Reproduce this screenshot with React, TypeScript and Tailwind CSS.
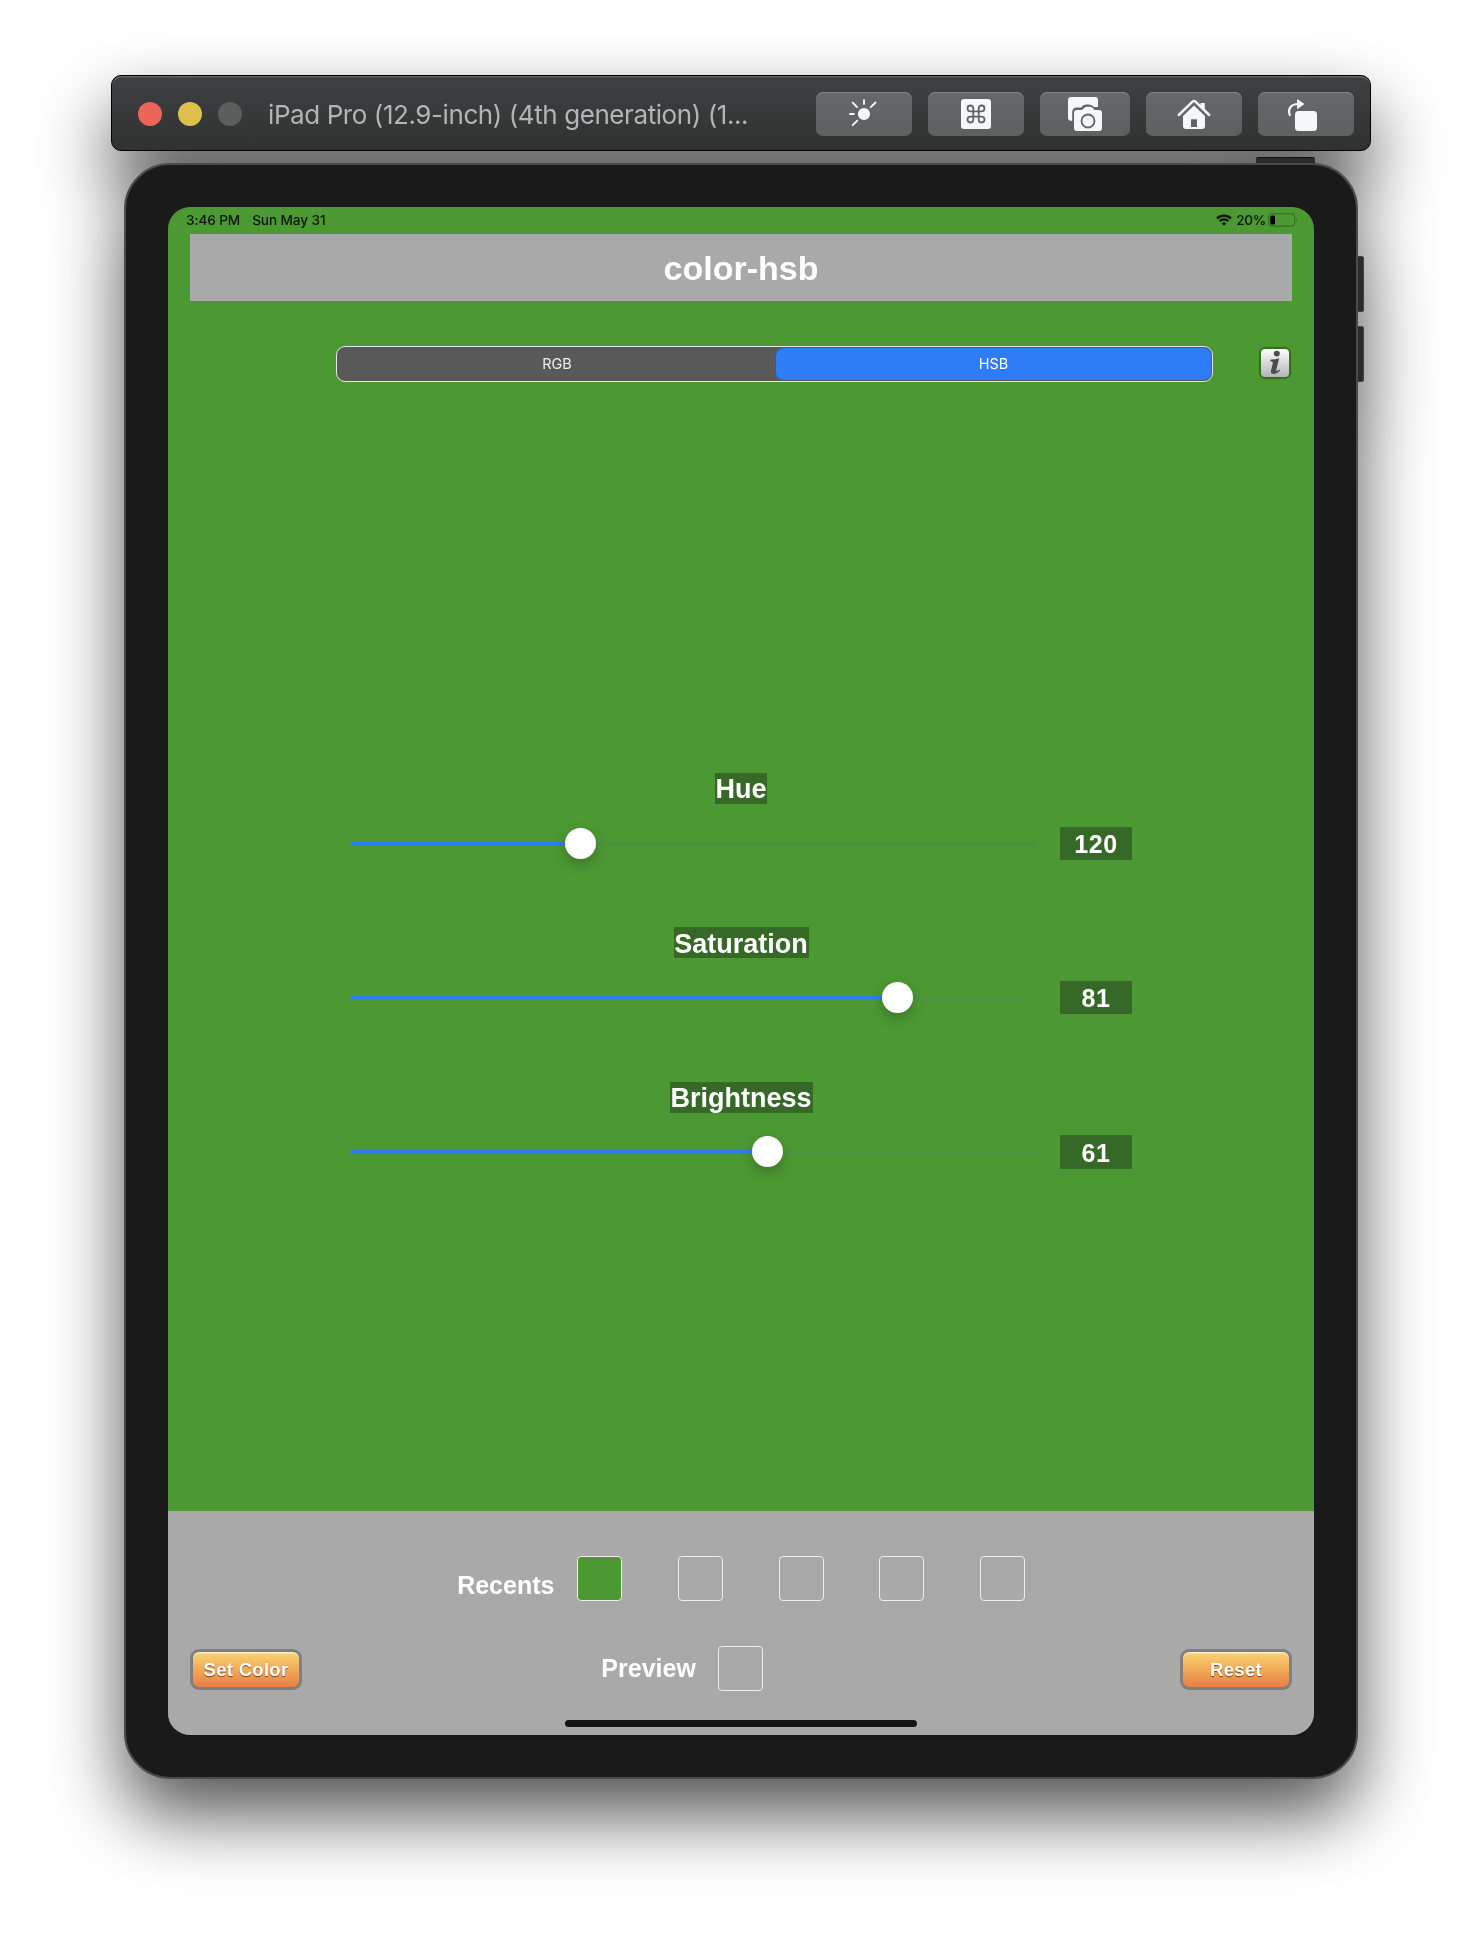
import React from "react";

const ROUNDED = "font-['Liberation_Sans'] font-bold text-white";

function ToolButton({ className = "w-24", children }: { className?: string; children: React.ReactNode }) {
  return (
    <button
      className={`${className} flex h-11 shrink-0 items-center justify-center rounded-[7px] bg-gradient-to-b from-[#66686a] to-[#5e5f60] shadow-[inset_0_1px_0_#808182]`}
    >
      {children}
    </button>
  );
}

function SunIcon() {
  return (
    <svg width="96" height="44" viewBox="0 0 96 44" stroke="#f6f7f9" strokeWidth="1.9" strokeLinecap="round">
      <circle cx="48" cy="22" r="6.1" fill="#f6f7f9" stroke="none" />
      <path d="M48 8v4M59.5 10.5l-4.700 4.700M36.700 10.700l4.300 4.300M34 22h3.800M36.700 33.200l4.600-4.600" />
    </svg>
  );
}

function CommandIcon() {
  return (
    <svg width="96" height="44" viewBox="0 0 96 44">
      <rect x="33" y="7" width="30" height="30" rx="3" fill="#f6f7f9" />
      <path
        d="M45.300 19.300v-3a2.900 2.900 0 1 0-2.900 3h11.200a2.900 2.900 0 1 0-2.900-3v11.400a2.900 2.900 0 1 0 2.900-3H42.400a2.900 2.900 0 1 0 2.900 3z"
        fill="none"
        stroke="#626364"
        strokeWidth="1.800"
      />
    </svg>
  );
}

function CameraIcon() {
  return (
    <svg width="90" height="44" viewBox="0 0 90 44">
      <path
        d="M31 5h24q3 0 3 3v7h-4q-2-2.500-5-2.500h-3q-3 0-5 3h-4q-4.800 0-4.800 4.800v8.600q-3.200 0-4.200-2.200V8q0-3 3-3z"
        fill="#f6f7f9"
      />
      <path
        d="M37 18h4.500q1 0 2-1.600 1.300-1.600 3-1.600h3.700q1.700 0 3 1.600 1 1.600 2 1.600H59q3 0 3 3v15q0 3-3 3H37q-3 0-3-3V21q0-3 3-3z"
        fill="#f6f7f9"
      />
      <circle cx="48" cy="29" r="6.500" fill="none" stroke="#626364" strokeWidth="1.800" />
    </svg>
  );
}

function HomeIcon() {
  return (
    <svg width="96" height="44" viewBox="0 0 96 44">
      <path d="M54.500 16v-5h4.300v9z" fill="#f6f7f9" />
      <path d="M32.800 23 46.500 9.700q1.500-1.400 3 0L63.200 23" fill="none" stroke="#f6f7f9" strokeWidth="2.500" strokeLinecap="round" />
      <path d="M37 23.900 48 13.400l11 10.500V34q0 3-3 3H40q-3 0-3-3z" fill="#f6f7f9" />
      <path d="M45 27.300h6V35h-6z" fill="#606162" />
    </svg>
  );
}

function RotateIcon() {
  return (
    <svg width="96" height="44" viewBox="0 0 96 44">
      <rect x="37" y="19" width="22" height="20" rx="3.500" fill="#f6f7f9" />
      <path d="M31.800 23C29.500 17 33 12 40 12" fill="none" stroke="#f6f7f9" strokeWidth="2.200" strokeLinecap="round" />
      <path d="M39.500 7.700 45.800 12l-6.300 4.500z" fill="#f6f7f9" stroke="#f6f7f9" strokeLinejoin="round" />
    </svg>
  );
}

function Toolbar() {
  return (
    <header className="flex h-[76px] w-[1260px] items-center rounded-[10px] border border-black bg-gradient-to-b from-[#3e4042] to-[#303231] pr-4 pl-[26px] shadow-[inset_0_1.5px_0_#636465]">
      <div className="flex gap-4 pt-px">
        <span className="size-6 rounded-full bg-[#ed6559]" />
        <span className="size-6 rounded-full bg-[#e0c04c]" />
        <span className="size-6 rounded-full bg-[#5c5e5e]" />
      </div>
      <h1 className="ml-[26px] flex-1 whitespace-nowrap pt-0.5 font-[Inter] text-[26px] tracking-[-0.42px] text-[#b2b4b5]">
        iPad Pro (12.9-inch) (4th generation) (1...
      </h1>
      <nav className="flex gap-4 pt-0.5">
        <ToolButton><SunIcon /></ToolButton>
        <ToolButton><CommandIcon /></ToolButton>
        <ToolButton className="w-[90px]"><CameraIcon /></ToolButton>
        <ToolButton><HomeIcon /></ToolButton>
        <ToolButton><RotateIcon /></ToolButton>
      </nav>
    </header>
  );
}

function StatusBar() {
  return (
    <div className="flex h-[27px] items-center justify-between pr-[16px] pl-[18px] font-[Inter] text-[13.6px] font-medium text-[#0b1608]">
      <div className="flex gap-3 tracking-[-0.1px]">
        <span>3:46 PM</span>
        <span>Sun May 31</span>
      </div>
      <div className="flex items-center">
        <svg width="16" height="12" viewBox="0 0 16 12" fill="none" stroke="#0b1608" strokeWidth="2.200">
          <path d="M1 4.400a10 10 0 0 1 14 0M3.600 7.100a6.300 6.300 0 0 1 8.800 0" />
          <path d="M8 11.700 5.700 9.400a3.300 3.300 0 0 1 4.600 0z" fill="#0b1608" stroke="none" />
        </svg>
        <span className="ml-1 tracking-[-0.3px]">20%</span>
        <svg className="ml-0.5" width="30" height="14" viewBox="0 0 30 14">
          <rect x="0.700" y="0.700" width="26" height="12.400" rx="3.300" fill="none" stroke="#356a26" strokeWidth="1.100" />
          <rect x="2.300" y="2.400" width="4.700" height="9" rx="1.500" fill="#000" />
          <path d="M28 5q1.700 2 0 4z" fill="#356a26" />
        </svg>
      </div>
    </div>
  );
}

function Segments() {
  return (
    <div className="mt-[44.5px] flex h-[36.5px] items-center">
      <div className="ml-[168px] flex h-[36.5px] w-[877px] rounded-[9px] border border-[#e8e8e8] bg-[#595959] p-px font-[Inter] text-[14.500px] text-white">
        <span className="flex flex-1 items-center justify-center text-white/90">RGB</span>
        <span className="flex w-[435px] items-center justify-center rounded-[7px] bg-[#2e7cf6] shadow-[0_0_1px_#24334e]">HSB</span>
      </div>
      <button className="-mt-0.5 ml-[46px] flex size-8 items-center justify-center rounded-[7px] bg-[#35701f] shadow-[0_0_1px_#35701f]">
        <span className="flex size-7 items-center justify-center rounded-[4px] bg-gradient-to-b from-white to-[#b4b4b4]">
          <svg width="28" height="28" viewBox="0 0 28 28" fill="#4d4d4d">
            <ellipse cx="15.800" cy="4.600" rx="3" ry="2.800" />
            <path d="M9.500 10.500q4 .2 8.700-1.300l-2.900 11.300q-.4 1.700.7 1.400l2.600-1.500.6 1.200q-2.900 3.400-6.400 3.400-3.600 0-2.700-3.800l1.700-7q.3-1.800-1.200-1.800H9.200z" />
          </svg>
        </span>
      </button>
    </div>
  );
}

function Slider({ label, labelClass, value, knob }: { label: string; labelClass: string; value: number; knob: number }) {
  return (
    <div className="flex h-[154.400px] flex-col">
      <div className={`${labelClass} ${ROUNDED} mx-auto flex h-[31px] items-center justify-center bg-[#366927] pt-0.5 text-[27px] whitespace-nowrap`}>
        {label}
      </div>
      <div className="mt-[22.500px] flex h-[33.500px] items-center">
        <div className="relative ml-[182px] h-[3.500px] w-[687px] rounded-full bg-[#4f923d]">
          <div className="h-full rounded-full bg-[#2f7cf0]" style={{ width: knob }} />
          <span
            className="absolute -top-[14px] size-[31px] rounded-full bg-white shadow-[0_5px_12px_rgba(0,0,0,0.22)]"
            style={{ left: knob - 15.5 }}
          />
        </div>
        <output className={`${ROUNDED} ml-[23px] flex h-[33.500px] w-[72px] items-center justify-center bg-[#366927] pt-[3px] text-[25px] tracking-[0.600px]`}>
          {value}
        </output>
      </div>
    </div>
  );
}

function Swatch({ filled = false }: { filled?: boolean }) {
  return <span className={`${filled ? "bg-[#4c9833]" : ""} size-[45px] shrink-0 rounded-[4px] border-[1.500px] border-[#eeeeee]`} />;
}

function ActionButton({ children }: { children: React.ReactNode }) {
  return (
    <button className={`${ROUNDED} mt-[3px] h-[41px] w-[112px] rounded-[9px] border-[3px] border-[#808080] bg-gradient-to-b from-[#f8d570] to-[#e67e43] text-[18.500px] tracking-[0.300px] whitespace-nowrap shadow-[inset_0_1.500px_0_#f7ead0] [text-shadow:0_1px_1px_rgba(80,40,0,0.75)]`}>
      {children}
    </button>
  );
}

function Footer() {
  return (
    <footer className="flex h-[224px] flex-col bg-[#a9a9a9] pt-[45px]">
      <div className="flex h-[45px] items-center justify-center">
        <span className={`${ROUNDED} mr-[22px] w-[98px] pt-[14px] text-[25px] whitespace-nowrap`}>Recents</span>
        <div className="flex gap-[55.700px]">
          <Swatch filled />
          <Swatch />
          <Swatch />
          <Swatch />
          <Swatch />
        </div>
      </div>
      <div className="mx-[22px] mt-[44.5px] grid h-[45px] grid-cols-3 items-center">
        <ActionButton>Set Color</ActionButton>
        <div className="flex items-center">
          <span className={`${ROUNDED} ml-[44px] w-[96px] pt-0.5 text-[25px] whitespace-nowrap`}>Preview</span>
          <span className="ml-[21px] flex"><Swatch /></span>
        </div>
        <div className="flex justify-end"><ActionButton>Reset</ActionButton></div>
      </div>
      <div className="mx-auto mt-[29.5px] h-[7px] w-[352px] rounded-full bg-[#141414]" />
    </footer>
  );
}

export default function App() {
  return (
    <main className="flex h-[1938px] w-[1482px] flex-col items-center overflow-hidden bg-white pt-[75px]">
      <div className="flex flex-col items-center [filter:drop-shadow(0_36px_36px_rgba(0,0,0,0.67))]">
        <Toolbar />
        <section className="relative mt-3 h-[1616px] w-[1234px]">
          <span className="absolute -top-[6px] left-[1132px] h-5 w-[59px] rounded-[2px] border-t border-[#111] bg-[#2b2b2b]" />
          <span className="absolute top-[93px] -right-[6px] h-14 w-5 rounded-[2px] border border-[#444] bg-[#2b2b2b]" />
          <span className="absolute top-[163px] -right-[6px] h-14 w-5 rounded-[2px] border border-[#444] bg-[#2b2b2b]" />
          <div className="relative h-full rounded-[46px] border-2 border-[#4a4b4c] bg-[#1a1a1a] px-[42px] pt-[42px]">
            <div className="flex h-[1528px] w-[1146px] flex-col overflow-hidden rounded-[22px] bg-[#4c9833]">
              <StatusBar />
              <div className={`${ROUNDED} mx-[22px] flex h-[67px] shrink-0 items-center justify-center bg-[#a9a9a9] pt-0.5 text-[34px]`}>
                color-hsb
              </div>
              <Segments />
              <div className="mt-[391px] flex-1">
                <Slider label="Hue" labelClass="w-[52px]" value={120} knob={230} />
                <Slider label="Saturation" labelClass="w-[135px]" value={81} knob={547} />
                <Slider label="Brightness" labelClass="w-[143px]" value={61} knob={417} />
              </div>
              <Footer />
            </div>
          </div>
        </section>
      </div>
    </main>
  );
}
